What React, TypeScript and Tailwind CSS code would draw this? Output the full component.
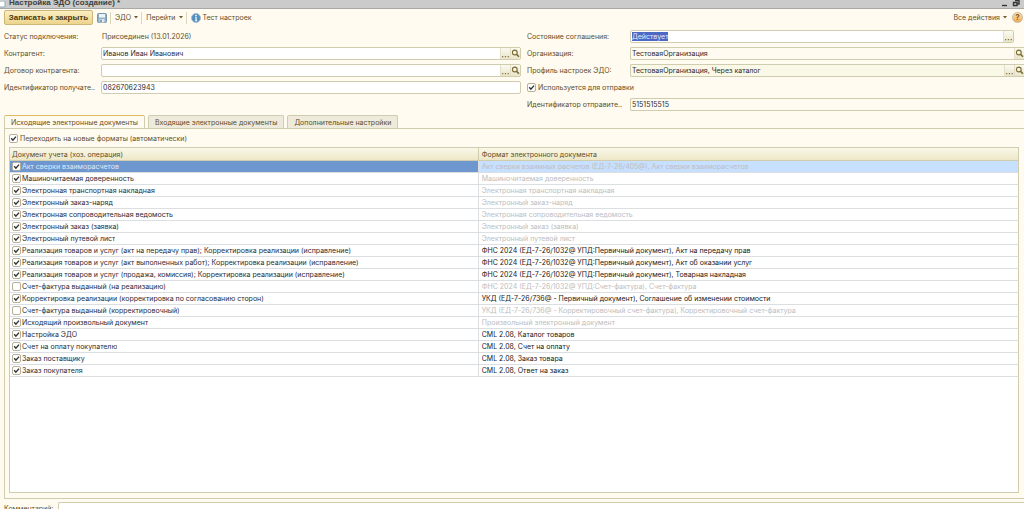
import { useState, type ReactNode } from 'react';

interface DocRow {
  doc: string;
  format: string;
  checked: boolean;
  muted?: boolean;
}

const ROWS: DocRow[] = [
  { doc: 'Акт сверки взаиморасчетов', format: 'Акт сверки взаимных расчетов (ЕД-7-26/405@), Акт сверки взаиморасчетов', checked: true, muted: true },
  { doc: 'Машиночитаемая доверенность', format: 'Машиночитаемая доверенность', checked: true, muted: true },
  { doc: 'Электронная транспортная накладная', format: 'Электронная транспортная накладная', checked: true, muted: true },
  { doc: 'Электронный заказ-наряд', format: 'Электронный заказ-наряд', checked: true, muted: true },
  { doc: 'Электронная сопроводительная ведомость', format: 'Электронная сопроводительная ведомость', checked: true, muted: true },
  { doc: 'Электронный заказ (заявка)', format: 'Электронный заказ (заявка)', checked: true, muted: true },
  { doc: 'Электронный путевой лист', format: 'Электронный путевой лист', checked: true, muted: true },
  { doc: 'Реализация товаров и услуг (акт на передачу прав); Корректировка реализации (исправление)', format: 'ФНС 2024 (ЕД-7-26/1032@ УПД:Первичный документ), Акт на передачу прав', checked: true },
  { doc: 'Реализация товаров и услуг (акт выполненных работ); Корректировка реализации (исправление)', format: 'ФНС 2024 (ЕД-7-26/1032@ УПД:Первичный документ), Акт об оказании услуг', checked: true },
  { doc: 'Реализация товаров и услуг (продажа, комиссия); Корректировка реализации (исправление)', format: 'ФНС 2024 (ЕД-7-26/1032@ УПД:Первичный документ), Товарная накладная', checked: true },
  { doc: 'Счет-фактура выданный (на реализацию)', format: 'ФНС 2024 (ЕД-7-26/1032@ УПД:Счет-фактура), Счет-фактура', checked: false, muted: true },
  { doc: 'Корректировка реализации (корректировка по согласованию сторон)', format: 'УКД (ЕД-7-26/736@ - Первичный документ), Соглашение об изменении стоимости', checked: true },
  { doc: 'Счет-фактура выданный (корректировочный)', format: 'УКД (ЕД-7-26/736@ - Корректировочный счет-фактура), Корректировочный счет-фактура', checked: false, muted: true },
  { doc: 'Исходящий произвольный документ', format: 'Произвольный электронный документ', checked: true, muted: true },
  { doc: 'Настройка ЭДО', format: 'CML 2.08, Каталог товаров', checked: true },
  { doc: 'Счет на оплату покупателю', format: 'CML 2.08, Счет на оплату', checked: true },
  { doc: 'Заказ поставщику', format: 'CML 2.08, Заказ товара', checked: true },
  { doc: 'Заказ покупателя', format: 'CML 2.08, Ответ на заказ', checked: true },
];

const TABS = ['Исходящие электронные документы', 'Входящие электронные документы', 'Дополнительные настройки'];

function Checkbox({ label, checked, className }: { label: string; checked: boolean; className?: string }) {
  return (
    <label className={`flex items-center ${className ?? 'gap-[2px]'}`}>
      <span className="relative size-[9px] shrink-0">
        <input
          type="checkbox"
          defaultChecked={checked}
          className="peer block size-[9px] appearance-none rounded-[2px] border border-[#b5b097] bg-white"
        />
        <svg viewBox="0 0 9 9" className="pointer-events-none absolute inset-0 hidden size-[9px] peer-checked:block">
          <path d="M2.2 4.2 L3.9 6.2 L7 2.6" fill="none" stroke="#333" strokeWidth="1.4" />
        </svg>
      </span>
      <span className="truncate">{label}</span>
    </label>
  );
}

function Magnifier() {
  return (
    <svg viewBox="0 0 9 9" className="size-[9px]" fill="none" stroke="#7c6a34">
      <circle cx="3.8" cy="3.5" r="2.4" strokeWidth="1.1" />
      <path d="M5.6 5.4 L8 7.8" strokeWidth="1.5" />
    </svg>
  );
}

function FieldButton({ kind }: { kind: 'dots' | 'search' }) {
  return (
    <button
      type="button"
      aria-label={kind === 'dots' ? 'Выбрать' : 'Открыть'}
      className="flex w-[10px] shrink-0 items-center justify-center border-l border-[#e3dfc8] bg-linear-to-b from-[#fbfaf0] to-[#e9e5ca]"
    >
      {kind === 'search' ? (
        <Magnifier />
      ) : (
        <svg viewBox="0 0 9 9" className="size-[9px]" fill="#8a7a4a">
          <path d="M1 7h1.3v1.3H1zM3.8 7h1.3v1.3H3.8zM6.6 7h1.3v1.3H6.6z" />
        </svg>
      )}
    </button>
  );
}

interface FieldProps {
  id: string;
  label: string;
  value: string;
  tone?: string;
  box?: string;
  labelWidth?: string;
  children?: ReactNode;
}

function Field({ id, label, value, tone = 'bg-white', box = 'rounded-[2px] border', labelWidth = 'w-[97px]', children }: FieldProps) {
  return (
    <div className="flex h-[13px] items-stretch">
      <label htmlFor={id} className={`${labelWidth} shrink-0 self-center whitespace-nowrap`}>
        {label}
      </label>
      <div className={`flex min-w-0 flex-1 overflow-hidden border-[#d0ccae] ${box} ${tone}`}>
        <input id={id} defaultValue={value} className="min-w-0 flex-1 bg-transparent px-px text-[#2b2b35] outline-none" />
        {children}
      </div>
    </div>
  );
}

function Caret() {
  return (
    <svg viewBox="0 0 4 3" className="h-[3px] w-[4px]" fill="#6b5a2a">
      <path d="M0 0h4L2 2.5z" />
    </svg>
  );
}

function Toolbar() {
  return (
    <div className="flex h-[15px] items-center pr-[1px] pl-1">
      <button
        type="button"
        className="h-[15px] w-[89px] rounded-[2px] border border-[#cdb677] bg-linear-to-b from-[#fbeec2] to-[#ecd48c] font-['Liberation_Sans',sans-serif] text-[8px] leading-[10px] font-bold text-[#4c3a10]"
      >
        Записать и закрыть
      </button>
      <button type="button" aria-label="Записать" className="ml-[4px]">
        <svg viewBox="0 0 10 10" className="size-[10px]">
          <rect x="0.5" y="0.5" width="9" height="9" rx="1" fill="#8fafc4" stroke="#7795aa" />
          <rect x="2" y="1" width="6" height="3.6" fill="#eaf3f8" />
          <rect x="2.5" y="6" width="5" height="3.5" fill="#dfe8ee" />
          <rect x="3.3" y="6.7" width="1.4" height="2.2" fill="#587f9c" />
        </svg>
      </button>
      <span className="ml-[3px] h-3 w-px bg-[#dcd6bb]" />
      <button type="button" className="ml-[4px] flex items-center gap-[3px]">
        ЭДО <Caret />
      </button>
      <span className="ml-[3px] h-3 w-px bg-[#dcd6bb]" />
      <button type="button" className="ml-[4px] flex items-center gap-[3px]">
        Перейти <Caret />
      </button>
      <span className="ml-[3px] h-3 w-px bg-[#dcd6bb]" />
      <button type="button" className="ml-[4px] flex items-center gap-[2px]">
        <svg viewBox="0 0 10 10" className="size-[10px]">
          <circle cx="5" cy="5" r="4.5" fill="#4f8fc0" stroke="#a9bccb" />
          <circle cx="5" cy="2.6" r="0.9" fill="#fff" />
          <path d="M4 4.2h1.7v3.2h.6v.8H3.9v-.8h.6V5H4z" fill="#fff" />
        </svg>
        Тест настроек
      </button>
      <button type="button" className="ml-auto flex items-center gap-[3px]">
        Все действия <Caret />
      </button>
      <button
        type="button"
        aria-label="Справка"
        className="ml-[5px] size-[11px] rounded-full border border-[#c9b79c] bg-linear-to-b from-[#fde3b4] to-[#f0a848] text-center text-[8px] leading-[9px] font-bold text-[#8a5a24]"
      >
        ?
      </button>
    </div>
  );
}

export default function App() {
  const [tab, setTab] = useState(0);

  return (
    <div className="flex h-screen flex-col overflow-hidden bg-[#fffbf0] font-[Inter,sans-serif] text-[7px] leading-[9px] text-[#5e4e2a]">
      {/* Window title */}
      <header className="flex h-[9px] shrink-0 items-end justify-between border-b border-[#a8a8a8] bg-[#cbcbcb] pr-[3px]">
        <div className="flex items-end">
          <svg viewBox="0 0 6 7" className="h-[7px] w-[6px]">
            <path d="M0 0h5v6H0" fill="#fff" stroke="#8fa9bf" />
          </svg>
          <h1 className="ml-[3px] font-['Liberation_Sans',sans-serif] text-[8px] leading-[10px] font-bold text-[#40403c]">Настройка ЭДО (создание) *</h1>
        </div>
        <svg viewBox="0 0 20 8" className="h-[8px] w-[20px]" fill="none" stroke="#333">
          <path d="M1 5.5h5" strokeWidth="1.4" />
          <path d="M14 0.5h4v3.5h-2M12.5 2.5h3.5v3h-3.5z" strokeWidth="1.4" />
        </svg>
      </header>

      <div className="mt-[1px] shrink-0">
        <Toolbar />
      </div>

      {/* Form fields */}
      <div className="mt-[5px] flex shrink-0 gap-[6px] pl-1">
        <div className="flex w-[517px] shrink-0 flex-col gap-1">
          <div className="flex h-[13px] items-center">
            <span className="w-[98px]">Статус подключения:</span>
            <span>Присоединен (13.01.2026)</span>
          </div>
          <Field id="partner" label="Контрагент:" value="Иванов Иван Иванович">
            <FieldButton kind="dots" />
            <FieldButton kind="search" />
          </Field>
          <Field id="contract" label="Договор контрагента:" value="">
            <FieldButton kind="dots" />
            <FieldButton kind="search" />
          </Field>
          <Field id="receiver" label="Идентификатор получате.." value="082670623943" />
        </div>

        <div className="flex min-w-0 flex-1 flex-col gap-1">
          <div className="flex h-[13px] items-stretch pr-[10px]">
            <span id="state" className="w-[103px] shrink-0 self-center">Состояние соглашения:</span>
            <div className="flex flex-1 overflow-hidden rounded-[2px] border border-[#d0ccae] bg-white">
              <div role="textbox" aria-labelledby="state" className="flex flex-1 items-center px-px">
                <span className="bg-[#4c68c4] text-[#e4eafc]">Действует</span>
              </div>
              <FieldButton kind="dots" />
            </div>
          </div>
          <Field id="org" label="Организация:" value="ТестоваяОрганизация" tone="bg-[#fffbf0]" box="rounded-l-[2px] border-y border-l" labelWidth="w-[103px]">
            <FieldButton kind="search" />
          </Field>
          <Field id="profile" label="Профиль настроек ЭДО:" value="ТестоваяОрганизация, Через каталог" tone="bg-[#faf8e6]" box="rounded-l-[2px] border-y border-l" labelWidth="w-[103px]">
            <FieldButton kind="dots" />
            <FieldButton kind="search" />
          </Field>
          <div className="flex h-[13px] items-center">
            <Checkbox label="Используется для отправки" checked />
          </div>
          <Field id="sender" label="Идентификатор отправите.." value="5151515515" tone="bg-[#fffbf0]" box="rounded-l-[2px] border-y border-l" labelWidth="w-[103px]" />
        </div>
      </div>

      {/* Tabs */}
      <div role="tablist" className="mt-1 flex shrink-0 gap-[3px] pl-1">
        {TABS.map((name, i) => (
          <button
            key={name}
            type="button"
            role="tab"
            aria-selected={tab === i}
            onClick={() => setTab(i)}
            className={`h-[13px] rounded-t-[2px] border border-b-0 px-[6px] ${
              tab === i ? 'relative z-10 -mb-px border-[#d0ccae] border-t-[#e0b860] bg-[#fffbf0]' : 'border-[#d0ccae] bg-[#efebdc]'
            }`}
          >
            {name}
          </button>
        ))}
      </div>

      <section className="ml-1 flex min-h-0 flex-1 flex-col border-y border-l border-[#d0ccae] pr-[5px] pb-[5px] pl-[4px]">
        <div className="flex h-[18px] shrink-0 items-center">
          <Checkbox label="Переходить на новые форматы (автоматически)" checked />
        </div>
        <div className="min-h-0 flex-1 overflow-hidden border border-[#d0ccae] bg-white">
          <table className="w-full table-fixed border-separate border-spacing-0">
            <thead>
              <tr className="bg-linear-to-b from-[#faf8ea] to-[#ece6c4] text-left">
                <th className="h-[13px] w-[46.5%] border-r border-b border-[#d0ccae] p-0 pl-[2px] font-normal">Документ учета (хоз. операция)</th>
                <th className="h-[13px] border-b border-[#d0ccae] p-0 pl-[3px] font-normal">Формат электронного документа</th>
              </tr>
            </thead>
            <tbody>
              {ROWS.map((row, i) => (
                <tr key={row.doc} className={i === 0 ? 'bg-[#c8e0ff]' : ''}>
                  <td className={`h-[12px] border-r border-b border-[#dcdfe2] p-0 pl-[2px] ${i === 0 ? 'bg-[#6e97cf] text-[#dfeafb]' : 'text-[#2b2b35]'}`}>
                    <Checkbox label={row.doc} checked={row.checked} className="gap-px" />
                  </td>
                  <td className={`h-[12px] truncate border-b border-[#dcdfe2] p-0 pl-[3px] ${row.muted ? 'text-[#bdbdbd]' : 'text-[#202020]'}`}>{row.format}</td>
                </tr>
              ))}
            </tbody>
          </table>
        </div>
      </section>

      <div className="mt-[3px] flex h-[7px] shrink-0 items-start overflow-hidden pl-1">
        <label htmlFor="comment" className="w-[54px] shrink-0 pt-[2px]">Комментарий:</label>
        <input id="comment" className="h-[13px] min-w-0 flex-1 rounded-tl-[2px] border-t border-l border-[#d0ccae] bg-white outline-none" />
      </div>
    </div>
  );
}
